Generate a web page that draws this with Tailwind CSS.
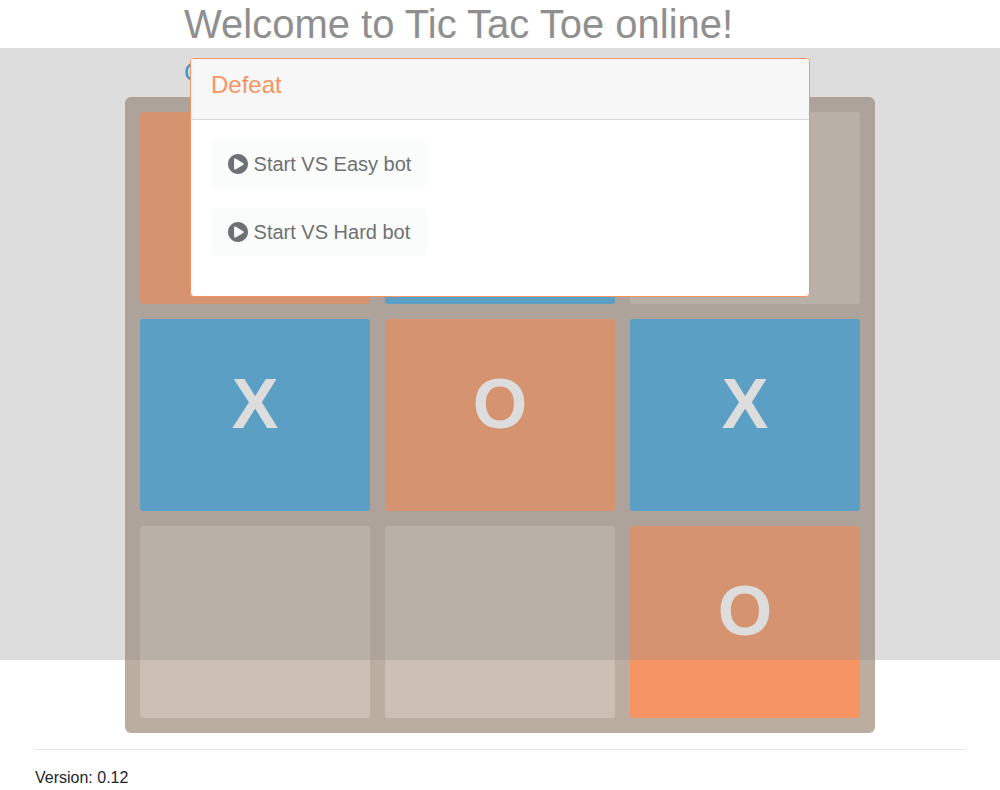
<!DOCTYPE html>
<html lang="en">
<head>
<meta charset="utf-8">
<title>Tic Tac Toe online</title>
<script src="https://cdn.jsdelivr.net/npm/@tailwindcss/browser@4"></script>
</head>
<body class="bg-white text-[#212529] font-['Liberation_Sans',Arial,sans-serif]">
<div class="relative">
  <header class="mx-auto max-w-[632px]">
    <h1 class="text-[40px] leading-12 text-[#8f8f8f]">Welcome to Tic Tac Toe online!</h1>
    <p class="pt-[10px] pb-[10px] text-[26px] leading-[29px] text-[#1e9be0]">O</p>
  </header>

  <main class="mx-auto max-w-[750px] rounded-md bg-[#bbada0] p-[15px]">
    <div class="grid grid-cols-3 gap-[15px] text-[70px] leading-[72px] font-bold text-white">
      <button class="h-48 rounded-[3px] bg-[#f59563] pb-[22px]">O</button>
      <button class="h-48 rounded-[3px] bg-[#47a7dc] pb-[22px]">X</button>
      <button class="h-48 rounded-[3px] bg-[#eee4da]/35" aria-label="Empty cell"></button>
      <button class="h-48 rounded-[3px] bg-[#47a7dc] pb-[22px]">X</button>
      <button class="h-48 rounded-[3px] bg-[#f59563] pb-[22px]">O</button>
      <button class="h-48 rounded-[3px] bg-[#47a7dc] pb-[22px]">X</button>
      <button class="h-48 rounded-[3px] bg-[#eee4da]/35" aria-label="Empty cell"></button>
      <button class="h-48 rounded-[3px] bg-[#eee4da]/35" aria-label="Empty cell"></button>
      <button class="h-48 rounded-[3px] bg-[#f59563] pb-[22px]">O</button>
    </div>
  </main>

  <div class="absolute inset-x-0 top-12 h-[612px] bg-[#8d8d8d]/30"></div>

  <section role="dialog" aria-labelledby="result" class="absolute inset-x-0 top-[58px] mx-auto max-w-[620px] overflow-hidden rounded border border-[#f59563] bg-white">
    <div class="border-b border-[#d8d8d8] bg-[#f7f7f7] px-5 pt-3 pb-5">
      <h2 id="result" class="text-2xl leading-7 text-[#f59563]">Defeat</h2>
    </div>
    <div class="flex flex-col items-start gap-5 px-5 pt-5 pb-10">
      <button class="h-12 rounded-md bg-[#fafcfb] px-[17px] text-xl text-[#6f7074]">
        <svg class="inline size-5 align-[-3px]" viewBox="8 8 496 496" fill="currentColor" aria-hidden="true"><path d="M504 256c0 137-111 248-248 248S8 393 8 256 119 8 256 8s248 111 248 248zM385 238l-190-116c-16-9-36 2-36 21v226c0 18 20 30 36 21l190-110c17-9 17-33 0-42z"/></svg>
        Start VS Easy bot
      </button>
      <button class="h-12 rounded-md bg-[#fafcfb] px-[17px] text-xl text-[#6f7074]">
        <svg class="inline size-5 align-[-3px]" viewBox="8 8 496 496" fill="currentColor" aria-hidden="true"><path d="M504 256c0 137-111 248-248 248S8 393 8 256 119 8 256 8s248 111 248 248zM385 238l-190-116c-16-9-36 2-36 21v226c0 18 20 30 36 21l190-110c17-9 17-33 0-42z"/></svg>
        Start VS Hard bot
      </button>
    </div>
  </section>
</div>

<footer class="mx-[35px] mt-4 border-t border-[#e5e5e5] pt-4 leading-6">Version: 0.12</footer>
</body>
</html>
